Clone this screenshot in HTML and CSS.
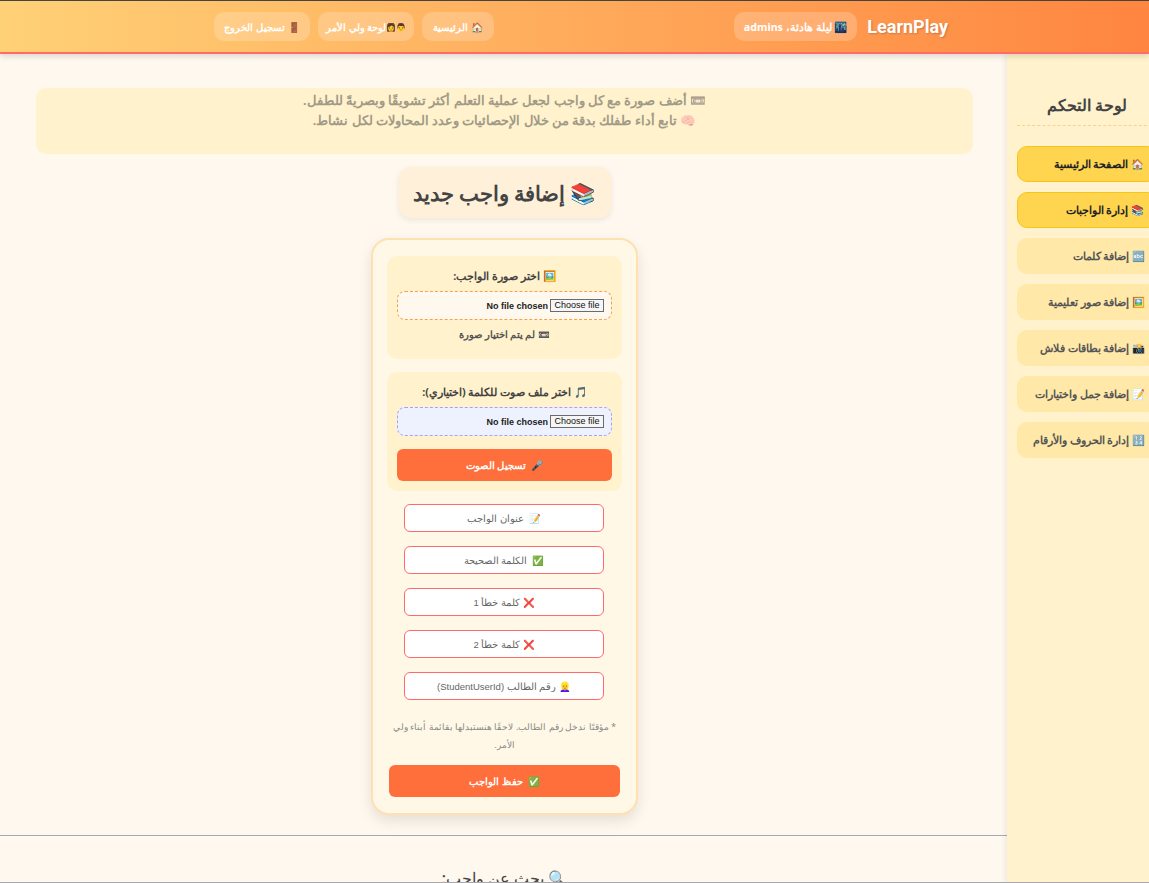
FILE: index.html
```html
<!DOCTYPE html>
<html lang="ar" dir="rtl">
<head>
<meta charset="utf-8">
<title>LearnPlay</title>
<link rel="stylesheet" href="styles.css">
</head>
<body>
<header class="topbar">
  <div class="brand-group">
    <span class="logo">LearnPlay</span>
    <span class="pill greet">🌃 ليلة هادئة، admins</span>
  </div>
  <nav class="topnav">
    <a class="pill nav-home">🏠 الرئيسية</a>
    <a class="pill nav-wide"><span class="nav-emoji">👨👩</span>لوحة ولي الأمر</a>
    <a class="pill nav-wide">🚪 تسجيل الخروج</a>
  </nav>
</header>
<div class="layout">
  <main class="content">
    <div class="notice">
      <p>📼 أضف صورة مع كل واجب لجعل عملية التعلم أكثر تشويقًا وبصريةً للطفل.</p>
      <p>🧠 تابع أداء طفلك بدقة من خلال الإحصائيات وعدد المحاولات لكل نشاط.</p>
    </div>
    <h2 class="page-title">📚 إضافة واجب جديد</h2>
    <form class="card">
      <section class="panel">
        <label class="panel-label">🖼️ اختر صورة الواجب:</label>
        <div class="file file-img"><button class="choose" type="button">Choose file</button><span>No file chosen</span></div>
        <p class="no-image">📼 لم يتم اختيار صورة</p>
      </section>
      <section class="panel panel-audio">
        <label class="panel-label">🎵 اختر ملف صوت للكلمة (اختياري):</label>
        <div class="file file-audio"><button class="choose" type="button">Choose file</button><span>No file chosen</span></div>
        <button class="btn record" type="button">🎤&nbsp; تسجيل الصوت</button>
      </section>
      <input class="field" placeholder="📝  عنوان الواجب">
      <input class="field" placeholder="✅  الكلمة الصحيحة">
      <input class="field" placeholder="❌ كلمة خطأ 1">
      <input class="field" placeholder="❌ كلمة خطأ 2">
      <input class="field" placeholder="👱‍♀️ رقم الطالب (StudentUserId)">
      <p class="hint">* مؤقتًا ندخل رقم الطالب. لاحقًا هنستبدلها بقائمة أبناء ولي الأمر.</p>
      <button class="btn save" type="button">✅&nbsp; حفظ الواجب</button>
    </form>
    <hr class="divider">
    <h3 class="search-title">🔍 بحث عن واجب:</h3>
  </main>
  <aside class="sidebar">
    <h3 class="side-title">لوحة التحكم</h3>
    <a class="side-item active">🏠 الصفحة الرئيسية</a>
    <a class="side-item active">📚 إدارة الواجبات</a>
    <a class="side-item">🔤 إضافة كلمات</a>
    <a class="side-item">🖼️ إضافة صور تعليمية</a>
    <a class="side-item">📸 إضافة بطاقات فلاش</a>
    <a class="side-item">📝 إضافة جمل واختيارات</a>
    <a class="side-item">🔢 إدارة الحروف والأرقام</a>
  </aside>
</div>
<div class="bottom-line"></div>
</body>
</html>
```
FILE: styles.css
```css
* { box-sizing: border-box; }
html, body { margin: 0; height: 883px; overflow: hidden; }
body {
  font-family: "Noto Sans", "Liberation Sans", sans-serif;
  background: #fff8ee;
  color: #444;
  position: relative;
}
.topbar {
  height: 54px;
  border-top: 1px solid #444;
  border-bottom: 2px solid #ff6b6b;
  background: linear-gradient(to left, #ff8540, #ffd176);
  box-shadow: 0 2px 6px rgba(0,0,0,.15);
  display: flex;
  align-items: center;
  padding: 0 201px 0 214px;
  justify-content: space-between;
  position: relative;
  z-index: 2;
}
.brand-group, .topnav { display: flex; align-items: center; }
.brand-group { gap: 10px; }
.topnav { gap: 8px; }
.logo { color: #fff; font-family: Roboto, sans-serif; font-size: 18px; font-weight: 700; text-shadow: 1px 1px 2px rgba(0,0,0,.2); }
.pill {
  height: 29px;
  padding: 0 10px;
  border-radius: 10px;
  background: rgba(255,255,255,.2);
  color: #fff;
  font-size: 10px;
  font-weight: 700;
  display: flex;
  align-items: center;
  white-space: nowrap;
}
.greet { font-size: 10.7px; }
.nav-home { width: 72px; padding: 0; justify-content: center; }
.nav-wide { width: 96px; padding: 0; justify-content: center; }
.nav-emoji { font-size: 8px; }
.layout { display: flex; direction: ltr; height: 829px; }
.content { flex: none; width: 1007px; direction: rtl; padding: 34px 34px 0 36px; display: flex; flex-direction: column; align-items: center; }
.notice {
  flex: none;
  align-self: stretch;
  height: 66px;
  background: #fff2cc;
  border-radius: 10px;
  text-align: center;
  font-size: 12.6px;
  font-weight: 700;
  padding-top: 3px;
}
.notice p { margin: 0; line-height: 20px; color: #444; opacity: .5; }
.page-title {
  flex: none;
  margin: 13px 0 20px;
  height: 51px;
  padding: 0 14px;
  display: flex;
  align-items: center;
  background: #fff0d9;
  border-radius: 12px;
  box-shadow: 0 2px 6px rgba(0,0,0,.08);
  font-size: 20.5px;
  font-weight: 700;
  color: #444;
}
.card {
  width: 267px;
  height: 577px;
  background: #fff8e7;
  border: 2px solid #ffe0b2;
  border-radius: 18px;
  box-shadow: 0 6px 14px rgba(0,0,0,.1);
  padding: 16px 14px 0;
  display: flex;
  flex-direction: column;
  align-items: center;
  flex: none;
}
.panel {
  flex: none;
  align-self: stretch;
  height: 103px;
  background: #fff2cc;
  border-radius: 10px;
  padding: 12px 10px 0;
  text-align: center;
  margin-bottom: 13px;
}
.panel-audio { height: 119px; }
.panel-label { display: block; font-size: 10.8px; font-weight: 700; line-height: 15px; color: #444; margin-bottom: 8px; }
.file {
  display: flex;
  align-items: center;
  gap: 2px;
  width: 100%;
  height: 29px;
  border-radius: 8px;
  padding: 0 7px;
  font-size: 9px;
  font-weight: 700;
  color: #222;
  font-family: "Liberation Sans", sans-serif;
}
.choose {
  height: 13px;
  width: 54px;
  padding: 0;
  margin: 0;
  border: 1px solid #6b6b6b;
  border-radius: 0;
  background: #f6f6f6;
  color: #111;
  font-family: "Liberation Sans", sans-serif;
  font-size: 9px;
  line-height: 11px;
  direction: ltr;
}
.file-img { border: 1px dashed #ff9f43; background: #fff8ee; }
.file-audio { border: 1px dashed #a5a0ff; background: #eef2ff; }
.no-image { margin: 8px 0 0; font-size: 9.5px; font-weight: 700; line-height: 14px; color: #555; }
.btn {
  display: block;
  width: 100%;
  height: 32px;
  border: none;
  border-radius: 6px;
  background: #ff6f3c;
  color: #fff;
  font-family: inherit;
  font-size: 10px;
  font-weight: 700;
}
.record { margin-top: 13px; }
.field {
  flex: none;
  align-self: flex-start;
  width: 200px;
  height: 28px;
  margin: 0 18px 14px 0;
  border: 1px solid #ff6b6b;
  border-radius: 6px;
  background: #fff;
  text-align: center;
  font-family: "Liberation Sans", sans-serif;
  font-size: 9.5px;
}
.field::placeholder { color: #666; opacity: 1; }
.hint { flex: none; margin: 4px 0 11px; text-align: center; font-size: 9.3px; line-height: 18px; color: #888; padding: 0 2px; }
.save { width: 231px; flex: none; font-size: 9.5px; }
.divider { flex: none; align-self: stretch; margin: 20px -34px 0 -36px; border: none; border-top: 1px solid #a8a8b0; }
.search-title { flex: none; margin: 30px 0 0; font-size: 15.5px; font-weight: 500; color: #444; line-height: 24px; }
.sidebar {
  flex: none;
  width: 160px;
  direction: rtl;
  background: #fff2cc;
  box-shadow: -2px 0 5px rgba(0,0,0,.07);
  padding: 0 10px;
}
.side-title {
  margin: 0 0 20px;
  padding: 40px 0 9px;
  border-bottom: 1px dashed #ffd08a;
  text-align: center;
  font-size: 16px;
  font-weight: 700;
  color: #444;
  line-height: 22px;
}
.side-item {
  display: flex;
  align-items: center;
  height: 36px;
  margin-bottom: 10px;
  padding: 0 12px;
  border-radius: 10px;
  background: #ffe8a8;
  color: #555;
  font-size: 10.5px;
  font-weight: 700;
  white-space: nowrap;
}
.side-item.active { background: #ffd54f; border: 1px solid #f5c518; color: #222; }
.bottom-line { position: absolute; left: 0; right: 0; bottom: 0; height: 1px; background: #a8a8b0; z-index: 3; }
```
